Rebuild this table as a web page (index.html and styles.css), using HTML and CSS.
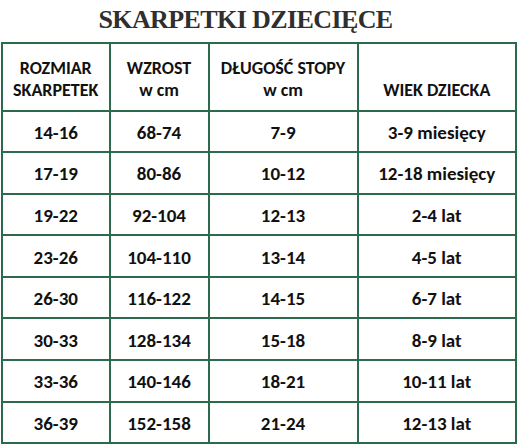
FILE: index.html
```html
<!DOCTYPE html>
<html lang="pl">
<head>
<meta charset="utf-8">
<link rel="stylesheet" href="styles.css">
</head>
<body>
<div class="title">SKARPETKI DZIECIĘCE</div>
<table class="sizes">
  <colgroup>
    <col class="c1"><col class="c2"><col class="c3"><col class="c4">
  </colgroup>
  <thead>
    <tr class="head">
      <th>ROZMIAR<br>SKARPETEK</th>
      <th>WZROST<br>w cm</th>
      <th>DŁUGOŚĆ STOPY<br>w cm</th>
      <th>WIEK DZIECKA</th>
    </tr>
  </thead>
  <tbody>
    <tr><td>14-16</td><td>68-74</td><td>7-9</td><td>3-9 miesięcy</td></tr>
    <tr><td>17-19</td><td>80-86</td><td>10-12</td><td>12-18 miesięcy</td></tr>
    <tr><td>19-22</td><td>92-104</td><td>12-13</td><td>2-4 lat</td></tr>
    <tr><td>23-26</td><td>104-110</td><td>13-14</td><td>4-5 lat</td></tr>
    <tr><td>26-30</td><td>116-122</td><td>14-15</td><td>6-7 lat</td></tr>
    <tr><td>30-33</td><td>128-134</td><td>15-18</td><td>8-9 lat</td></tr>
    <tr><td>33-36</td><td>140-146</td><td>18-21</td><td>10-11 lat</td></tr>
    <tr><td>36-39</td><td>152-158</td><td>21-24</td><td>12-13 lat</td></tr>
  </tbody>
</table>
</body>
</html>
```
FILE: styles.css
```css
html, body {
  margin: 0;
  padding: 0;
  background: #ffffff;
}
body {
  width: 517px;
  height: 444px;
  overflow: hidden;
}
.title {
  height: 42px;
  box-sizing: border-box;
  padding: 3px 26px 0 0;
  text-align: center;
  font-family: "Liberation Serif", serif;
  font-weight: bold;
  font-size: 26px;
  letter-spacing: -0.6px;
  line-height: 34px;
  color: #2f2f2f;
}
.sizes {
  margin-left: 1px;
  width: 515px;
  border-collapse: collapse;
  table-layout: fixed;
  font-family: "Carlito", "Lato", sans-serif;
  font-weight: bold;
  font-size: 19px;
  color: #111111;
}
.c1 { width: 107.5px; }
.c2 { width: 99px; }
.c3 { width: 149px; }
.c4 { width: 158.5px; }
.sizes th, .sizes td {
  border: 2px solid #2c6a4e;
  text-align: center;
  padding: 0;
}
.sizes th {
  font-weight: bold;
  font-size: 18px;
  line-height: 22px;
  vertical-align: bottom;
  padding-bottom: 9px;
}
.head { height: 67.5px; }
.sizes tbody tr { height: 41.6px; }
.sizes td {
  line-height: 22px;
  vertical-align: middle;
  padding-top: 3px;
}
```
